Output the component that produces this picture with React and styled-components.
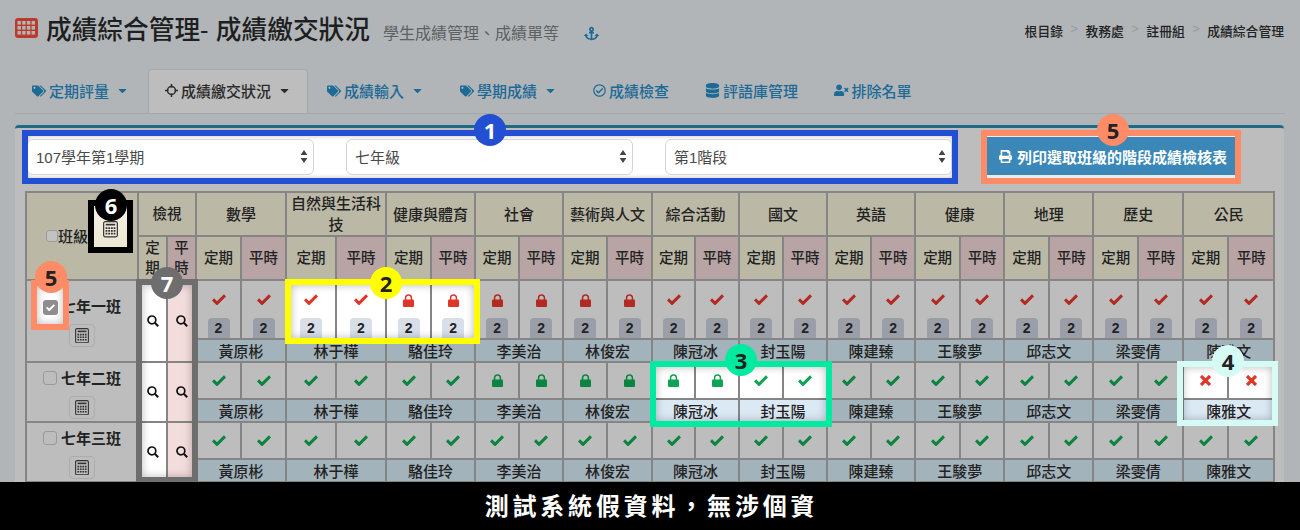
import React from 'react';
import styled, { createGlobalStyle } from 'styled-components';
import {
  FaAnchor, FaCaretDown, FaDatabase, FaPrint, FaRegCheckCircle, FaTags, FaUserTimes,
} from 'react-icons/fa';

const subjects = [
  { name: '數學', w: [45, 45], teacher: '黃原彬' },
  { name: '自然與生活科技', w: [50, 50], teacher: '林于樺' },
  { name: '健康與體育', w: [45, 44], teacher: '駱佳玲' },
  { name: '社會', w: [44, 44], teacher: '李美治' },
  { name: '藝術與人文', w: [44, 45], teacher: '林俊宏' },
  { name: '綜合活動', w: [43, 44], teacher: '陳冠冰' },
  { name: '國文', w: [44, 44], teacher: '封玉陽' },
  { name: '英語', w: [44, 44], teacher: '陳建臻' },
  { name: '健康', w: [45, 44], teacher: '王駿夢' },
  { name: '地理', w: [45, 44], teacher: '邱志文' },
  { name: '歷史', w: [45, 45], teacher: '梁雯倩' },
  { name: '公民', w: [45, 46], teacher: '陳雅文' },
];

const rows = [
  { name: '七年一班', tone: 'red', locks: [2, 3, 4], lit: [1, 2], first: true, height: 59, teacherHeight: 22 },
  { name: '七年二班', tone: 'green', locks: [3, 4, 5], crosses: [11], lit: [5, 6, 11], height: 37, teacherHeight: 22 },
  { name: '七年三班', tone: 'green', height: 37, teacherHeight: 22 },
];

const tabs = [
  { label: '定期評量', Icon: FaTags, size: 14, caret: true },
  { label: '成績繳交狀況', Icon: TargetIcon, caret: true, active: true },
  { label: '成績輸入', Icon: FaTags, size: 14, caret: true },
  { label: '學期成績', Icon: FaTags, size: 14, caret: true },
  { label: '成績檢查', Icon: FaRegCheckCircle, size: 13 },
  { label: '評語庫管理', Icon: FaDatabase, size: 15 },
  { label: '排除名單', Icon: FaUserTimes, size: 14.5 },
];

const GlobalStyle = createGlobalStyle`
  html, body {
    margin: 0;
    height: 530px;
    overflow: hidden;
    font-family: "Liberation Sans", "Noto Sans CJK TC", sans-serif;
  }
`;

const Page = styled.div`
  position: relative;
  width: 1300px;
  height: 530px;
  overflow: hidden;
  background: #b1b5b8;
  color: #222;
`;

const Header = styled.header`
  display: flex;
  align-items: center;
  height: 69px;
  padding: 0 16px 14px 15px;
  box-sizing: border-box;
`;

const Title = styled.h1`
  margin: 0 0 0 8px;
  font-size: 25.7px;
  font-weight: 500;
  color: #1e1f20;
`;

const Subtitle = styled.span`
  margin-left: 13px;
  padding-top: 9px;
  font-size: 16px;
  color: #5c6165;
`;

const AnchorLink = styled.span`
  margin-left: 25px;
  padding-top: 14px;
  font-size: 15px;
  color: #1d6a96;
`;

const Crumbs = styled.nav`
  display: flex;
  gap: 7px;
  margin-left: auto;
  padding-top: 6px;
  font-size: 12.8px;
  font-weight: 500;
  color: #222;
`;

const Sep = styled.span`
  padding: 0 0.5px;
  color: #95999c;
  font-weight: 400;
`;

const Nav = styled.nav`
  display: flex;
  gap: 2px;
  height: 45px;
  margin: 0 15px;
  box-sizing: border-box;
  border-bottom: 1px solid #a4a8ab;
`;

const Tab = styled.a`
  display: flex;
  align-items: center;
  gap: 3px;
  height: 44px;
  padding: 0 16px 2px;
  box-sizing: border-box;
  font-size: 15px;
  font-weight: 500;
  color: ${(p) => (p.$active ? '#2b2b2b' : '#1d6a96')};
  background: ${(p) => (p.$active ? '#bdbdbd' : 'transparent')};
  border: 1px solid ${(p) => (p.$active ? '#a9a9a9' : 'transparent')};
  border-bottom: none;
  border-radius: 4px 4px 0 0;
  svg.caret {
    margin-left: 4px;
    font-size: 13px;
  }
`;

const Panel = styled.section`
  height: 420px;
  margin: 11px 16px 0 15px;
  padding: 2px 0 0;
  border-top: 3px solid #1f6a85;
  border-radius: 4px 4px 0 0;
  background: #bdbdbd;
`;

const Toolbar = styled.div`
  display: flex;
  gap: 23px;
  margin-left: 7px;
`;

const SelectFrame = styled.div`
  box-sizing: border-box;
  width: 936px;
  height: 54px;
  padding: 3px 0;
  overflow: hidden;
  border: 6px solid #2350d2;
  background: #fff;
  box-shadow: inset 0 0 5px rgba(0, 0, 0, 0.25);
`;

const SelectRow = styled.div`
  display: grid;
  grid-template-columns: repeat(3, 287px);
  column-gap: 32px;
  margin-left: -1px;
`;

const SelectBox = styled.div`
  display: flex;
  align-items: center;
  height: 36px;
  padding: 0 5px 2px 8px;
  box-sizing: border-box;
  border: 1px solid #d3d6d9;
  border-radius: 6px;
  background: #fff;
  font-size: 15px;
  color: #4a4a4a;
`;

const SelectText = styled.span`
  flex: 1;
`;

const PrintFrame = styled.div`
  box-sizing: border-box;
  width: 260px;
  height: 54px;
  border: 6px solid #ff8c66;
  background: #e9ecef;
  padding: 1px 0;
`;

const PrintButton = styled.button`
  display: flex;
  align-items: center;
  justify-content: center;
  gap: 5px;
  width: 100%;
  height: 38px;
  padding: 0 0 0 4px;
  border: none;
  background: #3a87b8;
  color: #fff;
  font: 700 15px "Liberation Sans", "Noto Sans CJK TC", sans-serif;
  svg {
    font-size: 13px;
  }
`;

const Grid = styled.table`
  table-layout: fixed;
  width: 1247px;
  margin: 7px 0 0 10px;
  border-collapse: collapse;
  font-size: 14px;
  th, td {
    padding: 0;
    border: 2px solid #858585;
    box-sizing: border-box;
    text-align: center;
    overflow: hidden;
  }
`;

const HeadCell = styled.th`
  height: 44px;
  font-size: ${(p) => (p.$small ? 14.5 : 15)}px;
  font-weight: 500;
  line-height: 21px;
  background: ${(p) => (p.$pink ? '#b8a4a4' : '#bbb9a6')};
  color: #222;
`;

const ClassHead = styled.div`
  display: flex;
  align-items: center;
  padding-left: 19px;
  height: 60px;
  font-size: 15px;
`;

const TinyHead = styled.span`
  display: block;
  width: 15px;
  margin: 0 auto;
  line-height: 20px;
`;

const ClassCell = styled.td`
  background: #bdbdbd;
  vertical-align: top;
`;

const ClassName = styled.div`
  display: flex;
  align-items: center;
  justify-content: center;
  gap: 4px;
  height: ${(p) => (p.$tall ? 43 : 33)}px;
  padding: ${(p) => (p.$tall ? '5px 0 0' : '0 0 4px')};
  box-sizing: border-box;
  font-size: 15px;
  font-weight: 700;
`;

const Check = styled.span`
  display: inline-block;
  width: ${(p) => (p.$soft ? 10 : 12)}px;
  height: ${(p) => (p.$soft ? 10 : 12)}px;
  border: 1px solid #9a9a9a;
  border-radius: 3px;
  background: ${(p) => (p.$soft ? '#c2c2c2' : '#bdbdbd')};
`;

const CheckedBox = styled.span`
  display: flex;
  align-items: center;
  justify-content: center;
  width: 15px;
  height: 15px;
  margin-top: 5px;
  border-radius: 3px;
  background: #8e8e8e;
  color: #fff;
`;

const CalcButton = styled.span`
  display: flex;
  align-items: center;
  justify-content: center;
  width: 26px;
  height: 23px;
  margin: 0 auto;
  border: 1px solid #adadad;
  border-radius: 4px;
  background: #bdbdbd;
  box-sizing: border-box;
`;

const ViewCell = styled.td`
  background: ${(p) => (p.$pink ? '#f3dcdc' : '#fff')};
  color: #111;
  svg {
    display: block;
    margin: 0 auto;
  }
`;

const MarkCell = styled.td`
  position: relative;
  height: ${(p) => p.$h}px;
  background: ${(p) => (p.$lit ? '#fff' : '#bdbdbd')};
  vertical-align: ${(p) => (p.$top ? 'top' : 'middle')};
`;

const Mark = styled.span`
  display: block;
  padding-top: ${(p) => (p.$top ? 13 : 0)}px;
  line-height: 0;
  color: ${(p) => p.$color};
`;

const CountTag = styled.span`
  position: absolute;
  left: 50%;
  bottom: 0;
  width: 22px;
  height: 20px;
  margin-left: -11px;
  border-radius: 4px 4px 0 0;
  background: ${(p) => (p.$lit ? '#d8dfe8' : '#9a9ea8')};
  font-size: 14px;
  font-weight: 700;
  line-height: 20px;
`;

const TeacherCell = styled.td`
  height: ${(p) => p.$h}px;
  font-size: 15px;
  font-weight: 500;
  background: ${(p) => (p.$lit ? '#dbe9f5' : '#a3b3bb')};
  color: #222;
`;

const Callout = styled.div`
  position: absolute;
  left: ${(p) => p.$x}px;
  top: ${(p) => p.$y}px;
  width: ${(p) => p.$w}px;
  height: ${(p) => p.$h}px;
  box-sizing: border-box;
  border: 6px solid ${(p) => p.$color};
  background: ${(p) => p.$fill || 'transparent'};
  box-shadow: inset 0 0 8px rgba(0, 0, 0, 0.28);
  display: flex;
  align-items: center;
  justify-content: center;
`;

const Badge = styled.span`
  position: absolute;
  left: ${(p) => p.$x - 16}px;
  top: ${(p) => p.$y - 16}px;
  width: 32px;
  height: 32px;
  border-radius: 50%;
  background: ${(p) => p.$bg};
  color: ${(p) => p.$fg || '#222'};
  font: 700 22px/32px "Open Sans", sans-serif;
  text-align: center;
`;

const Notice = styled.div`
  position: absolute;
  left: 0;
  right: 0;
  bottom: 0;
  height: 48px;
  padding-left: 3px;
  background: #000;
  color: #fff;
  font-size: 24px;
  font-weight: 700;
  letter-spacing: 3.8px;
  line-height: 50px;
  text-align: center;
`;

const CreamCalc = styled(CalcButton)`
  width: 33px;
  height: 100%;
  padding-top: 6px;
  border: none;
  border-radius: 0;
  background: linear-gradient(#f6f2e6, #ece6d4);
`;

function TargetIcon() {
  return (
    <svg width="13" height="13" viewBox="0 0 13 13" fill="none" stroke="currentColor" strokeWidth="1.5">
      <circle cx="6.5" cy="6.5" r="4" />
      <path d="M6.5 0v3.4M6.5 9.6V13M0 6.5h3.4M9.6 6.5H13" />
    </svg>
  );
}

function GridLogo() {
  return (
    <svg width="23" height="20" viewBox="0 0 23 20">
      <rect width="23" height="20" rx="3" fill="#bc3a2b" />
      {[0, 1, 2, 3].map((c) =>
        [0, 1, 2].map((r) => (
          <rect key={`${c}-${r}`} x={2.5 + c * 4.7} y={3 + r * 5} width="3.4" height="3.6" fill="#b1b5b8" />
        )),
      )}
    </svg>
  );
}

function CalcIcon({ size = 14 }) {
  return (
    <svg width={size} height={size * 1.1} viewBox="0 0 14 15.4" fill="none" stroke="#333">
      <rect x="0.6" y="0.6" width="12.8" height="14.2" rx="1.4" strokeWidth="1.1" />
      <path d="M2.6 3.4h8.8" strokeWidth="1.6" />
      {[6.6, 9.2, 11.8].map((y) => (
        <path key={y} d={`M2.4 ${y}h9.2`} strokeWidth="1.6" strokeDasharray="1.7 0.8" />
      ))}
    </svg>
  );
}

function CheckIcon({ size = 14 }) {
  return (
    <svg width={size} height={size * 0.8} viewBox="0 0 14 11.2" fill="none" stroke="currentColor" strokeWidth="3">
      <path d="M1 5.4l4 4 8-8" />
    </svg>
  );
}

function CrossIcon() {
  return (
    <svg width="11" height="11" viewBox="0 0 11 11" fill="none" stroke="currentColor" strokeWidth="3.2">
      <path d="M1 1l9 9M10 1l-9 9" />
    </svg>
  );
}

function LockIcon() {
  return (
    <svg width="11" height="13" viewBox="0 0 11 13" fill="currentColor">
      <path d="M2.6 6V3.8a2.9 2.9 0 0 1 5.8 0V6" fill="none" stroke="currentColor" strokeWidth="1.5" />
      <rect y="5.4" width="11" height="7.6" rx="1" />
    </svg>
  );
}

function SearchIcon() {
  return (
    <svg width="12" height="12" viewBox="0 0 12 12" fill="none" stroke="currentColor">
      <circle cx="4.9" cy="4.9" r="3.9" strokeWidth="1.7" />
      <path d="M7.8 7.8l3.4 3.4" strokeWidth="2" />
    </svg>
  );
}

function UpDown() {
  return (
    <svg width="8" height="15" viewBox="0 0 8 15" fill="#444">
      <path d="M4 1l3.4 5H.6zM4 14L.6 9h6.8z" />
    </svg>
  );
}

const markColor = (tone, lit, cross) => {
  if (cross) return '#e0362a';
  if (tone === 'red') return lit ? '#e0362a' : '#b32a22';
  return lit ? '#11a354' : '#0b8440';
};

const markIcon = (row, i) => {
  if (row.crosses?.includes(i)) return <CrossIcon />;
  if (row.locks?.includes(i)) return <LockIcon />;
  return <CheckIcon />;
};

function MarkCells({ row }) {
  return subjects.flatMap((s, i) => {
    const lit = row.lit?.includes(i);
    return [0, 1].map((part) => (
      <MarkCell key={`${s.name}-${part}`} $h={row.height} $lit={lit} $top={row.first}>
        <Mark $top={row.first} $color={markColor(row.tone, lit, row.crosses?.includes(i))}>
          {markIcon(row, i)}
        </Mark>
        {row.first && <CountTag $lit={lit}>2</CountTag>}
      </MarkCell>
    ));
  });
}

export default function App() {
  return (
    <Page>
      <GlobalStyle />
      <Header>
        <GridLogo />
        <Title>成績綜合管理- 成績繳交狀況</Title>
        <Subtitle>學生成績管理、成績單等</Subtitle>
        <AnchorLink><FaAnchor /></AnchorLink>
        <Crumbs>
          <span>根目錄</span><Sep>&gt;</Sep>
          <span>教務處</span><Sep>&gt;</Sep>
          <span>註冊組</span><Sep>&gt;</Sep>
          <span>成績綜合管理</span>
        </Crumbs>
      </Header>
      <Nav>
        {tabs.map(({ label, Icon, size, caret, active }) => (
          <Tab key={label} $active={active}>
            <Icon size={size} />
            {label}
            {caret && <FaCaretDown className="caret" />}
          </Tab>
        ))}
      </Nav>
      <Panel>
        <Toolbar>
          <SelectFrame>
            <SelectRow>
              {['107學年第1學期', '七年級', '第1階段'].map((t) => (
                <SelectBox key={t}>
                  <SelectText>{t}</SelectText>
                  <UpDown />
                </SelectBox>
              ))}
            </SelectRow>
          </SelectFrame>
          <PrintFrame>
            <PrintButton><FaPrint />列印選取班級的階段成績檢核表</PrintButton>
          </PrintFrame>
        </Toolbar>
        <Grid>
          <colgroup>
            <col style={{ width: 112 }} />
            <col style={{ width: 29 }} />
            <col style={{ width: 29 }} />
            {subjects.flatMap((s) => s.w.map((w, i) => <col key={s.name + i} style={{ width: w }} />))}
          </colgroup>
          <thead>
            <tr>
              <HeadCell rowSpan={2}>
                <ClassHead><Check $soft />班級</ClassHead>
              </HeadCell>
              <HeadCell colSpan={2} $small>檢視</HeadCell>
              {subjects.map((s) => (
                <HeadCell key={s.name} colSpan={2}>{s.name}</HeadCell>
              ))}
            </tr>
            <tr>
              <HeadCell $small><TinyHead>定期</TinyHead></HeadCell>
              <HeadCell $small $pink><TinyHead>平時</TinyHead></HeadCell>
              {subjects.flatMap((s) => [
                <HeadCell key={s.name + 'a'} $small>定期</HeadCell>,
                <HeadCell key={s.name + 'b'} $small $pink>平時</HeadCell>,
              ])}
            </tr>
          </thead>
          <tbody>
            {rows.map((row) => (
              <React.Fragment key={row.name}>
                <tr>
                  <ClassCell rowSpan={2}>
                    <ClassName $tall={row.first}><Check />{row.name}</ClassName>
                    <CalcButton><CalcIcon /></CalcButton>
                  </ClassCell>
                  <ViewCell rowSpan={2}><SearchIcon /></ViewCell>
                  <ViewCell rowSpan={2} $pink><SearchIcon /></ViewCell>
                  <MarkCells row={row} />
                </tr>
                <tr>
                  {subjects.map((s, i) => (
                    <TeacherCell key={s.name} colSpan={2} $h={row.teacherHeight} $lit={row.lit?.includes(i) && !row.first}>
                      {s.teacher}
                    </TeacherCell>
                  ))}
                </tr>
              </React.Fragment>
            ))}
          </tbody>
        </Grid>
      </Panel>

      <Callout $x={88} $y={200} $w={45} $h={53} $color="#000">
        <CreamCalc><CalcIcon size={15} /></CreamCalc>
      </Callout>
      <Callout $x={31} $y={280} $w={38} $h={50} $color="#ff8c66" $fill="#fff">
        <CheckedBox><CheckIcon size={9} /></CheckedBox>
      </Callout>
      <Callout $x={285} $y={279} $w={195} $h={65} $color="#ffff00" />
      <Callout $x={650} $y={361} $w={182} $h={66} $color="#00eba0" />
      <Callout $x={1177} $y={361} $w={101} $h={65} $color="#d5fbf5" />
      <Callout $x={136} $y={279} $w={62} $h={204} $color="#6e6e6e" />

      <Badge $x={490} $y={130} $bg="#2350d2" $fg="#fff">1</Badge>
      <Badge $x={1113} $y={130} $bg="#ff8c66">5</Badge>
      <Badge $x={111} $y={205} $bg="#000" $fg="#fff">6</Badge>
      <Badge $x={51} $y={277} $bg="#ff8c66">5</Badge>
      <Badge $x={386} $y={283} $bg="#ffff00">2</Badge>
      <Badge $x={167} $y={283} $bg="#6e6e6e" $fg="#fff">7</Badge>
      <Badge $x={741} $y={360} $bg="#00eba0">3</Badge>
      <Badge $x={1228} $y={361} $bg="#d5fbf5">4</Badge>

      <Notice>測試系統假資料，無涉個資</Notice>
    </Page>
  );
}
